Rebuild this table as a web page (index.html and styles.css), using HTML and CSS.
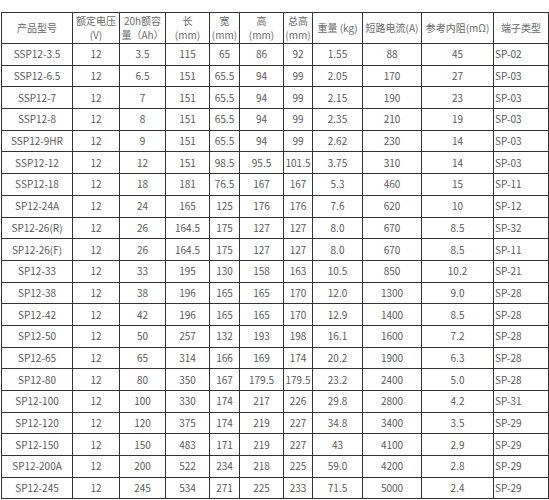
FILE: index.html
```html
<!DOCTYPE html>
<html lang="zh">
<head>
<meta charset="utf-8">
<link rel="stylesheet" href="styles.css">
</head>
<body>
<table class="spec">
<colgroup>
<col class="c1"><col class="c2"><col class="c3"><col class="c4"><col class="c5"><col class="c6"><col class="c7"><col class="c8"><col class="c9"><col class="c10"><col class="c11">
</colgroup>
<thead>
<tr>
<th>产品型号</th><th>额定电压<br>(V)</th><th>20h额容<br>量（Ah）</th><th>长<br>(mm)</th><th>宽<br>(mm)</th><th>高<br>(mm)</th><th>总高<br>(mm)</th><th>重量 (kg)</th><th>短路电流(A)</th><th>参考内阻(mΩ)</th><th>端子类型</th>
</tr>
</thead>
<tbody>
<tr><td>SSP12-3.5</td><td>12</td><td>3.5</td><td>115</td><td>65</td><td>86</td><td>92</td><td>1.55</td><td>88</td><td>45</td><td class="l">SP-02</td></tr>
<tr><td>SSP12-6.5</td><td>12</td><td>6.5</td><td>151</td><td>65.5</td><td>94</td><td>99</td><td>2.05</td><td>170</td><td>27</td><td class="l">SP-03</td></tr>
<tr><td>SSP12-7</td><td>12</td><td>7</td><td>151</td><td>65.5</td><td>94</td><td>99</td><td>2.15</td><td>190</td><td>23</td><td class="l">SP-03</td></tr>
<tr><td>SSP12-8</td><td>12</td><td>8</td><td>151</td><td>65.5</td><td>94</td><td>99</td><td>2.35</td><td>210</td><td>19</td><td class="l">SP-03</td></tr>
<tr><td>SSP12-9HR</td><td>12</td><td>9</td><td>151</td><td>65.5</td><td>94</td><td>99</td><td>2.62</td><td>230</td><td>14</td><td class="l">SP-03</td></tr>
<tr><td>SSP12-12</td><td>12</td><td>12</td><td>151</td><td>98.5</td><td>95.5</td><td>101.5</td><td>3.75</td><td>310</td><td>14</td><td class="l">SP-03</td></tr>
<tr><td>SSP12-18</td><td>12</td><td>18</td><td>181</td><td>76.5</td><td>167</td><td>167</td><td>5.3</td><td>460</td><td>15</td><td class="l">SP-11</td></tr>
<tr><td>SP12-24A</td><td>12</td><td>24</td><td>165</td><td>125</td><td>176</td><td>176</td><td>7.6</td><td>620</td><td>10</td><td class="l">SP-12</td></tr>
<tr><td>SP12-26(R)</td><td>12</td><td>26</td><td>164.5</td><td>175</td><td>127</td><td>127</td><td>8.0</td><td>670</td><td>8.5</td><td class="l">SP-32</td></tr>
<tr><td>SP12-26(F)</td><td>12</td><td>26</td><td>164.5</td><td>175</td><td>127</td><td>127</td><td>8.0</td><td>670</td><td>8.5</td><td class="l">SP-11</td></tr>
<tr><td>SP12-33</td><td>12</td><td>33</td><td>195</td><td>130</td><td>158</td><td>163</td><td>10.5</td><td>850</td><td>10.2</td><td class="l">SP-21</td></tr>
<tr><td>SP12-38</td><td>12</td><td>38</td><td>196</td><td>165</td><td>165</td><td>170</td><td>12.0</td><td>1300</td><td>9.0</td><td class="l">SP-28</td></tr>
<tr><td>SP12-42</td><td>12</td><td>42</td><td>196</td><td>165</td><td>165</td><td>170</td><td>12.9</td><td>1400</td><td>8.5</td><td class="l">SP-28</td></tr>
<tr><td>SP12-50</td><td>12</td><td>50</td><td>257</td><td>132</td><td>193</td><td>198</td><td>16.1</td><td>1600</td><td>7.2</td><td class="l">SP-28</td></tr>
<tr><td>SP12-65</td><td>12</td><td>65</td><td>314</td><td>166</td><td>169</td><td>174</td><td>20.2</td><td>1900</td><td>6.3</td><td class="l">SP-28</td></tr>
<tr><td>SP12-80</td><td>12</td><td>80</td><td>350</td><td>167</td><td>179.5</td><td>179.5</td><td>23.2</td><td>2400</td><td>5.0</td><td class="l">SP-28</td></tr>
<tr><td>SP12-100</td><td>12</td><td>100</td><td>330</td><td>174</td><td>217</td><td>226</td><td>29.8</td><td>2800</td><td>4.2</td><td class="l">SP-31</td></tr>
<tr><td>SP12-120</td><td>12</td><td>120</td><td>375</td><td>174</td><td>219</td><td>227</td><td>34.8</td><td>3400</td><td>3.5</td><td class="l">SP-29</td></tr>
<tr><td>SP12-150</td><td>12</td><td>150</td><td>483</td><td>171</td><td>219</td><td>227</td><td>43</td><td>4100</td><td>2.9</td><td class="l">SP-29</td></tr>
<tr><td>SP12-200A</td><td>12</td><td>200</td><td>522</td><td>234</td><td>218</td><td>225</td><td>59.0</td><td>4200</td><td>2.8</td><td class="l">SP-29</td></tr>
<tr><td>SP12-245</td><td>12</td><td>245</td><td>534</td><td>271</td><td>225</td><td>233</td><td>71.5</td><td>5000</td><td>2.4</td><td class="l">SP-29</td></tr>
</tbody>
</table>
</body>
</html>
```
FILE: styles.css
```css
html, body {
  margin: 0;
  padding: 0;
  background: #fff;
}
body {
  padding: 12px 0 0 1px;
  font-family: "Noto Sans CJK SC", "Noto Sans", sans-serif;
  font-size: 10px;
  color: #5a5a5a;
}
.spec {
  border-collapse: collapse;
  table-layout: fixed;
  width: 548px;
}
.spec th, .spec td {
  border: 1px solid #333;
  padding: 0;
  text-align: center;
  vertical-align: middle;
  font-weight: normal;
  white-space: nowrap;
  overflow: hidden;
}
.spec th {
  height: 30px;
  line-height: 14px;
  color: #6a6a6a;
}
.spec td {
  height: 20.7px;
  line-height: 12px;
}
.spec td.l {
  text-align: left;
  padding-left: 1px;
}
.c1 { width: 71px; }
.c2 { width: 47px; }
.c3 { width: 46px; }
.c4 { width: 44px; }
.c5 { width: 30px; }
.c6 { width: 44px; }
.c7 { width: 29px; }
.c8 { width: 50px; }
.c9 { width: 59px; }
.c10 { width: 72px; }
.c11 { width: 55px; }
```
